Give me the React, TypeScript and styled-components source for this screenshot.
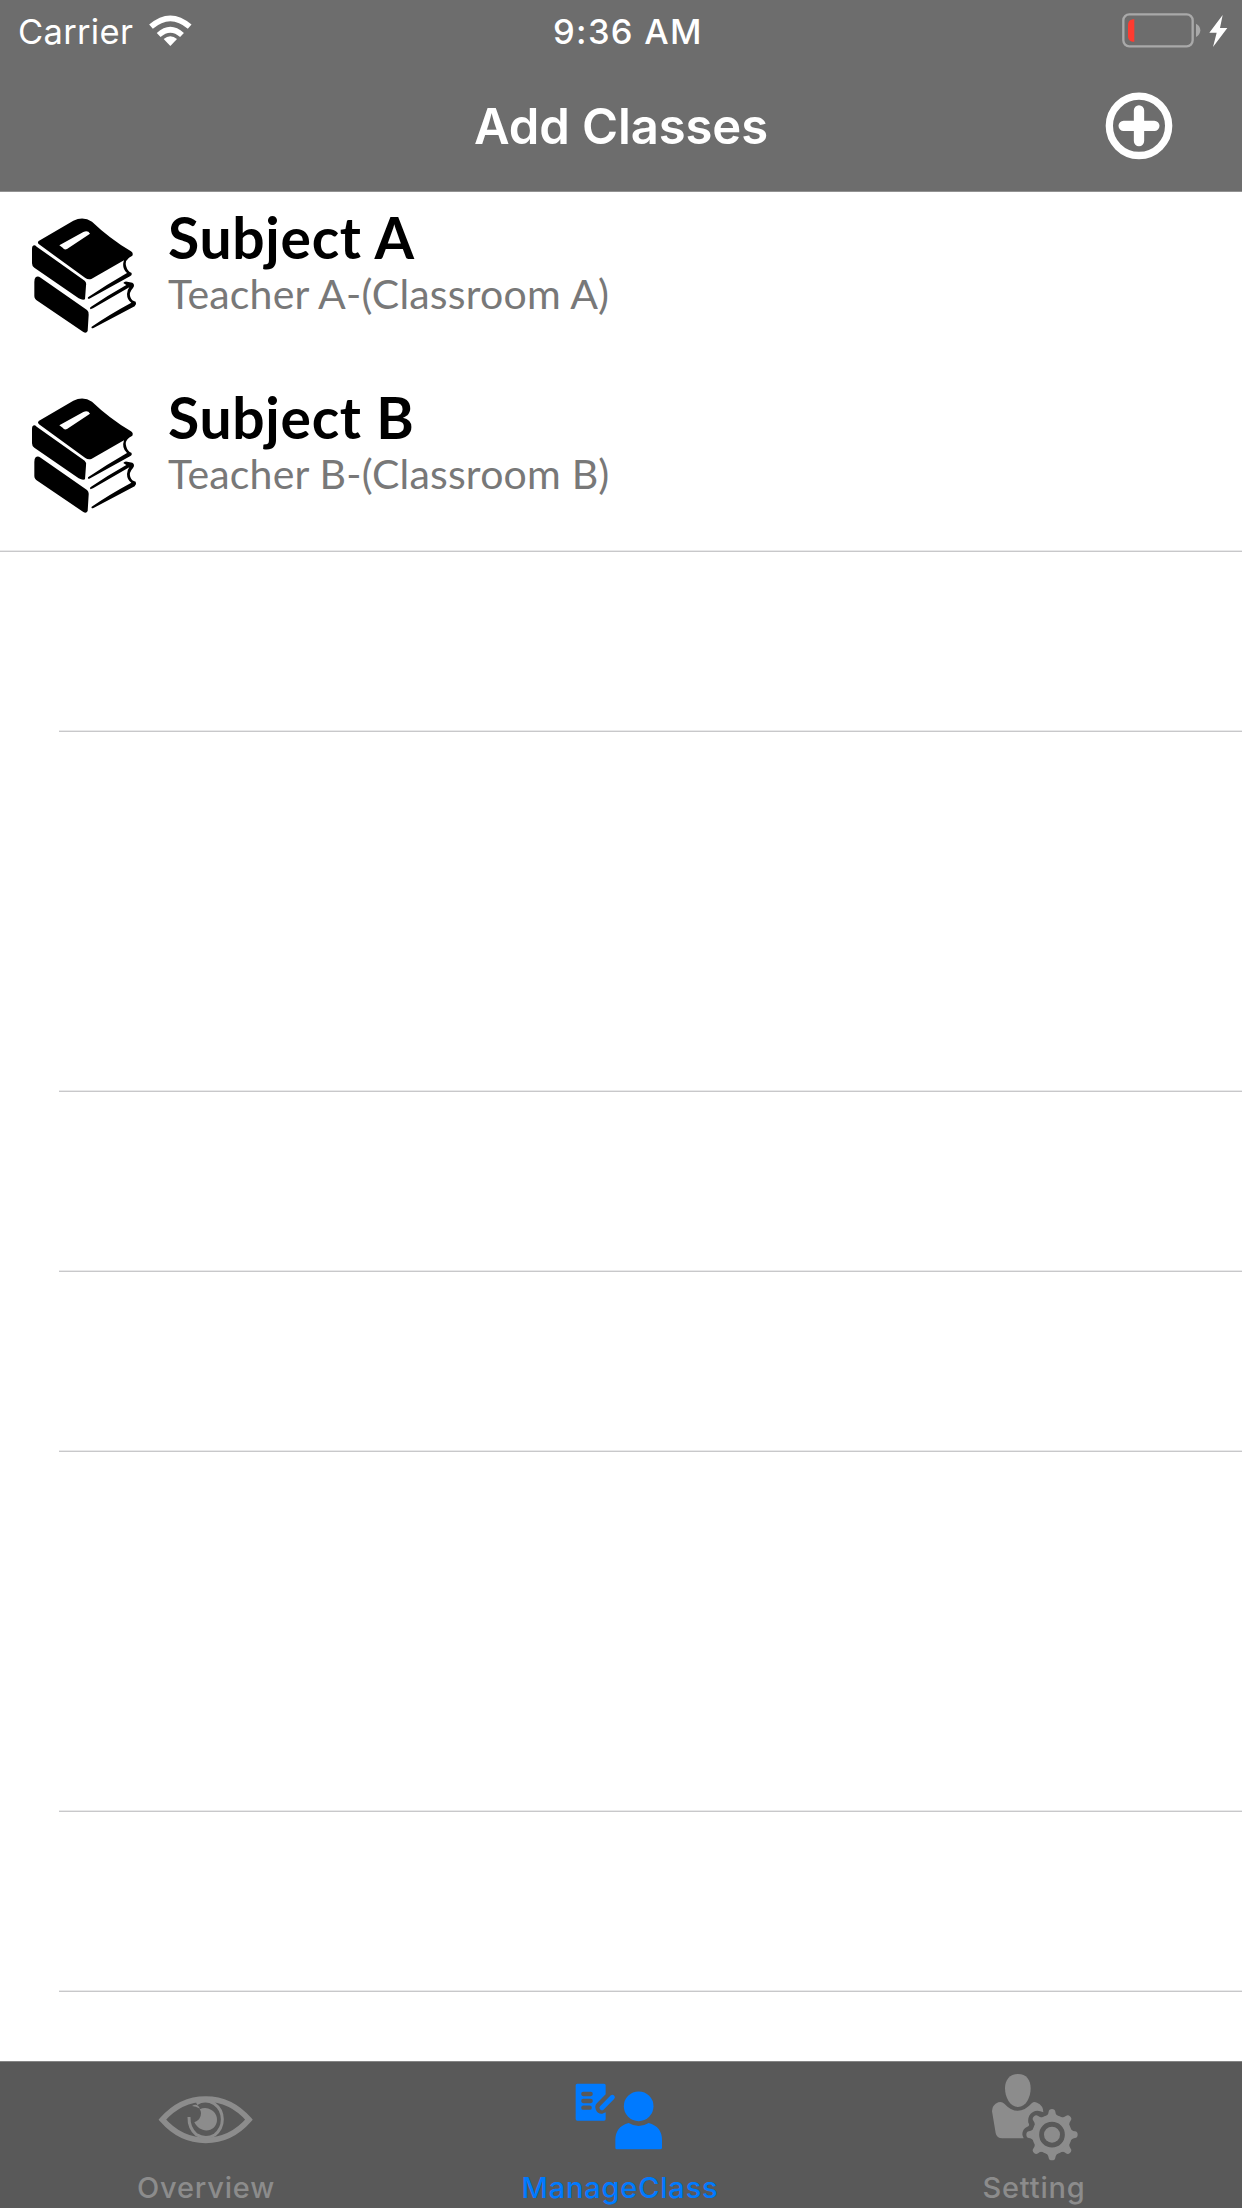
import React from "react";
import styled, { createGlobalStyle } from "styled-components";

const GlobalStyle = createGlobalStyle`
  * { box-sizing: border-box; }
  body { margin: 0; background: #fff; }
`;

const Screen = styled.div`
  width: 1242px;
  height: 2208px;
  display: flex;
  flex-direction: column;
  overflow: hidden;
  background: #fff;
  font-family: Inter, "Liberation Sans", sans-serif;
`;

const Header = styled.header`
  height: 192px;
  background: #6d6d6d;
  border-bottom: 1px solid #929292;
  color: #fff;
`;

const StatusBar = styled.div`
  height: 60px;
  display: grid;
  grid-template-columns: 1fr auto 1fr;
  align-items: center;
  padding: 1px 14px 0 18px;
`;

const Cluster = styled.div<{ $end?: boolean }>`
  display: flex;
  align-items: center;
  gap: ${(p) => (p.$end ? 8 : 16)}px;
  justify-content: ${(p) => (p.$end ? "flex-end" : "flex-start")};
`;

const StatusText = styled.span<{ $weight: number; $spacing: number; $indent?: number }>`
  font-size: 34.5px;
  line-height: 56px;
  padding: 2px 0 0 ${(p) => p.$indent ?? 0}px;
  font-weight: ${(p) => p.$weight};
  letter-spacing: ${(p) => p.$spacing}px;
  white-space: nowrap;
`;

const NavBar = styled.nav`
  height: 131px;
  display: grid;
  grid-template-columns: 1fr auto 1fr;
  align-items: center;
  padding: 0 69px 0 69px;
`;

const Title = styled.h1`
  grid-column: 2;
  margin: 0;
  padding-top: 2px;
  font-size: 49px;
  line-height: 129px;
  font-weight: 600;
  letter-spacing: -0.1px;
  white-space: nowrap;
`;

const AddButton = styled.button`
  justify-self: end;
  padding: 0;
  border: 0;
  background: none;
  display: flex;
`;

const Icon = styled.svg`
  display: block;
  flex: none;
  overflow: visible;
`;

const List = styled.main`
  height: 1869px;
  overflow: hidden;
`;

const Row = styled.section<{ $line?: "full" | "inset" }>`
  height: 180px;
  display: flex;
  align-items: flex-start;
  padding: 24px 0 0 30px;
  background: ${(p) =>
    p.$line
      ? `linear-gradient(#e9e9ea 50%, #c8c8ca 50%) right bottom / ${
          p.$line === "full" ? 1242 : 1183
        }px 2px no-repeat`
      : "none"};
`;

const Details = styled.div`
  display: flex;
  flex-direction: column;
  margin: -11px 0 0 30px;
  font-family: Optima, Lato, "Liberation Sans", sans-serif;
  white-space: nowrap;
`;

const Subject = styled.h2`
  margin: 0;
  font-size: 57px;
  line-height: 64px;
  font-weight: 700;
  letter-spacing: 0.7px;
  color: #000;
`;

const Teacher = styled.p`
  margin: 0;
  font-size: 41px;
  line-height: 49px;
  font-weight: 400;
  letter-spacing: 0.2px;
  color: #787878;
`;

const TabBar = styled.footer`
  height: 147px;
  display: grid;
  grid-template-columns: repeat(3, 1fr);
  background: #595959;
  border-top: 1px solid #858585;
`;

const Tab = styled.div<{ $active?: boolean }>`
  display: flex;
  flex-direction: column;
  align-items: center;
  padding-right: 2px;
  color: ${(p) => (p.$active ? "#007aff" : "#8c8c8c")};
`;

const TabIcon = styled.div`
  height: 106px;
  padding-top: 8px;
`;

const TabLabel = styled.span`
  font-size: 29px;
  line-height: 40px;
  font-weight: 500;
  letter-spacing: 0.8px;
`;

const Wifi = () => (
  <Icon width="43" height="32" viewBox="449 42 129 96" fill="none" stroke="#fff">
    <path d="M455 77Q513 27 571 77" strokeWidth="17" />
    <path d="M478 102Q513 70 548 102" strokeWidth="17" />
    <path d="M493 114Q513 98 533 114L513 135Z" fill="#fff" stroke="none" />
  </Icon>
);

const Battery = () => (
  <Icon width="79" height="36" viewBox="125 38 237 108">
    <rect x="129" y="42" width="208" height="96" rx="18" fill="none" stroke="#a9a9a9" strokeWidth="7" />
    <path d="M347 70Q360 77 360 90T347 110Z" fill="#a9a9a9" />
    <path d="M162 57V124C149 124 143 118 143 106V75C143 63 149 57 162 57Z" fill="#ff3b30" />
  </Icon>
);

const Bolt = () => (
  <Icon width="19" height="34" viewBox="386 41 57 102">
    <path d="M427 44L387 97H409L398 140L441 83H419Z" fill="#fff" />
  </Icon>
);

const Plus = () => (
  <Icon width="68" height="68" viewBox="74 275 204 204" fill="none" stroke="#fff">
    <circle cx="176" cy="376.500" r="89" strokeWidth="22" />
    <path d="M176 330V422M130 376.500H222" strokeWidth="31" strokeLinecap="round" />
  </Icon>
);

const Books = () => (
  <Icon width="108" height="124" viewBox="30 48 324 372" fill="#000">
    <path d="M56 123L160 62Q190 48 216 65Q267 114 333 154Q341 159 337 167L327 173Q313 184 319 200Q323 214 334 218Q338 224 330 229L208 296Q202 298 204 292Q258 255 321 219Q304 204 312 181L214 237Q204 240 196 234L57 133Q51 128 56 123Z" />
    <path d="M118 136L190 96Q204 90 210 101L141 147Q133 151 128 143Z" fill="#fff" />
    <path d="M39 137Q44 134 50 140L194 242Q200 247 198 257L195 298Q188 302 176 295L43 203Q36 199 36 190V146Q36 139 39 137Z" />
    <path d="M47 232Q53 227 62 233L201 330Q207 335 206 344L203 393Q199 401 190 396L53 303Q43 297 43 288V246Q43 236 47 232Z" />
    <path d="M310 249Q313 243 322 245L337 248Q346 253 339 264Q326 278 331 291Q335 303 347 305Q351 312 344 319L222 383Q212 388 215 380Q269 343 334 308Q321 299 321 282Q321 271 328 262L219 325Q207 331 211 322Q260 288 319 255Z" />
  </Icon>
);

const Eye = () => (
  <Icon width="94" height="94" viewBox="117 60 282 282" fill="none" stroke="currentColor">
    <path d="M127 209Q181 147 257 147T387 209Q333 271 257 271T127 209Z" strokeWidth="17" />
    <path d="M230 161Q255 145 283 161Q307 178 307 208Q307 237 284 255Q257 270 229 254Q206 234 207 201" strokeWidth="9" />
    <path d="M239 178Q257 170 273 179C299 193 296 230 271 239C253 246 232 236 223 217Q243 209 243 190Q243 182 239 178Z" fill="currentColor" stroke="none" />
    <path d="M216 168Q232 157 240 176Q227 168 216 168Z" fill="currentColor" stroke="none" />
  </Icon>
);

const Manage = () => (
  <Icon width="88" height="76" viewBox="228 60 264 228" fill="currentColor">
    <path d="M232 101H312Q317 101 317 106V133L292 158Q282 167 288 180Q294 193 307 191L317 187V207Q317 212 312 212H232Q227 212 227 207V106Q227 101 232 101Z" />
    <path d="M250 132H272M250 153H272M250 173H269" stroke="#595959" strokeWidth="13" strokeLinecap="round" />
    <path d="M306 173L337 142" stroke="currentColor" strokeWidth="15" strokeLinecap="round" />
    <circle cx="416" cy="169" r="44.500" />
    <path d="M386 219Q416 237 446 219Q486 230 486 270V293Q486 298 480 298H351Q346 298 346 293V270Q346 230 386 219Z" />
  </Icon>
);

const gear = Array.from({ length: 8 }, (_, i) => i * 45);

const Settings = () => (
  <Icon width="88" height="90" viewBox="90 60 264 270" fill="currentColor">
    <path d="M174 72C199 72 212 90 212 115C212 142 198 171 174 171S135 142 135 115C135 90 149 72 174 72Z" />
    <path d="M96 184Q96 165 115 157Q125 153 133 161Q174 205 216 159Q222 153 231 158Q250 166 250 187Q232 178 219 186Q202 196 205 218Q211 227 202 230Q187 237 187 253Q188 260 191 265H127Q110 265 107 249Z" />
    <circle cx="276" cy="254" r="49" fill="none" stroke="currentColor" strokeWidth="21" />
    {gear.map((angle) => (
      <path key={angle} d="M250 203Q265 197 266 185Q267 177 276 177T286 185Q287 197 302 203Z" transform={`rotate(${angle} 276 254)`} />
    ))}
    <circle cx="276" cy="254" r="24" />
  </Icon>
);

type RowData = { subject?: string; teacher?: string; line?: "full" | "inset" };

const rows: RowData[] = [
  { subject: "Subject A", teacher: "Teacher A-(Classroom A)" },
  { subject: "Subject B", teacher: "Teacher B-(Classroom B)", line: "full" },
  { line: "inset" },
  {},
  { line: "inset" },
  { line: "inset" },
  { line: "inset" },
  {},
  { line: "inset" },
  { line: "inset" },
  {},
];

const tabs = [
  { label: "Overview", icon: <Eye /> },
  { label: "ManageClass", icon: <Manage />, active: true },
  { label: "Setting", icon: <Settings /> },
];

export default function App() {
  return (
    <Screen>
      <GlobalStyle />
      <Header>
        <StatusBar>
          <Cluster>
            <StatusText $weight={400} $spacing={0.3}>Carrier</StatusText>
            <Wifi />
          </Cluster>
          <StatusText $weight={500} $spacing={1.3} $indent={10}>9:36 AM</StatusText>
          <Cluster $end>
            <Battery />
            <Bolt />
          </Cluster>
        </StatusBar>
        <NavBar>
          <Title>Add Classes</Title>
          <AddButton aria-label="Add class"><Plus /></AddButton>
        </NavBar>
      </Header>
      <List>
        {rows.map((row, i) => (
          <Row key={i} $line={row.line}>
            {row.subject && (
              <>
                <Books />
                <Details>
                  <Subject>{row.subject}</Subject>
                  <Teacher>{row.teacher}</Teacher>
                </Details>
              </>
            )}
          </Row>
        ))}
      </List>
      <TabBar>
        {tabs.map((tab) => (
          <Tab key={tab.label} $active={tab.active}>
            <TabIcon>{tab.icon}</TabIcon>
            <TabLabel>{tab.label}</TabLabel>
          </Tab>
        ))}
      </TabBar>
    </Screen>
  );
}
